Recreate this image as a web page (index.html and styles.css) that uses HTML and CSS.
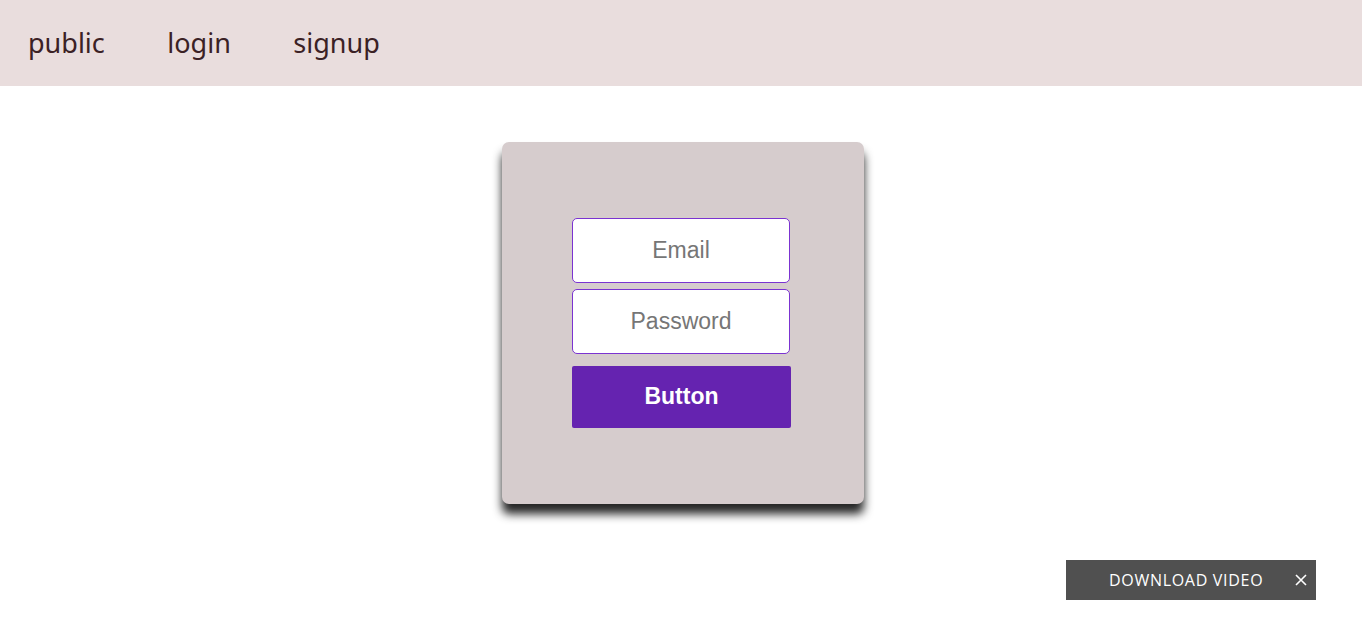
FILE: index.html
```html
<!DOCTYPE html>
<html>
<head>
<meta charset="utf-8">
<link rel="stylesheet" href="styles.css">
</head>
<body>
<nav class="nav">
  <a class="nav-link" href="#">public</a>
  <a class="nav-link" href="#">login</a>
  <a class="nav-link" href="#">signup</a>
</nav>
<main class="main">
  <div class="card">
    <form class="form">
      <input class="field" type="email" placeholder="Email">
      <input class="field" type="password" placeholder="Password">
      <button class="btn" type="button">Button</button>
    </form>
  </div>
</main>
<div class="dl">
  <span class="dl-text">DOWNLOAD VIDEO</span>
  <svg class="dl-close" width="12" height="12" viewBox="0 0 12 12"><path d="M1 1 L11 11 M11 1 L1 11" stroke="#fff" stroke-width="1.6" fill="none"/></svg>
</div>
</body>
</html>
```
FILE: styles.css
```css
html, body { margin: 0; padding: 0; }
body { background: #fff; font-family: "Liberation Sans", Arial, sans-serif; height: 628px; overflow: hidden; }
.nav {
  height: 86px;
  background: #e9dddd;
  display: flex;
  align-items: center;
  padding-left: 28px;
  box-sizing: border-box;
}
.nav-link {
  font-family: "Noto Sans", "Open Sans", sans-serif;
  font-size: 27px;
  color: #3b2125;
  text-decoration: none;
  margin-right: 62.5px;
  line-height: 1;
  padding-bottom: 2px;
}
.main {
  display: flex;
  justify-content: center;
  padding-top: 56px;
}
.card {
  width: 362px;
  height: 362px;
  background: #d6cccd;
  border-radius: 7px;
  box-shadow: 0 10px 10px rgba(0,0,0,0.85);
  display: flex;
  align-items: center;
  justify-content: center;
  margin-left: 4px;
}
.form {
  display: flex;
  flex-direction: column;
  width: 219px;
  margin-left: -3px;
}
.field {
  box-sizing: border-box;
  width: 218px;
  height: 65px;
  border: 1px solid #7b33d1;
  border-radius: 5px;
  background: #fff;
  font-family: "Liberation Sans", Arial, sans-serif;
  font-size: 23px;
  text-align: center;
  color: #333;
  outline: none;
  padding: 0;
}
.field + .field { margin-top: 6px; }
.field::placeholder { color: #767676; }
.btn {
  margin-top: 12px;
  width: 219px;
  height: 62px;
  border: none;
  border-radius: 2px;
  background: #6523b0;
  color: #fff;
  font-family: "Liberation Sans", Arial, sans-serif;
  font-weight: bold;
  font-size: 23px;
  padding: 0 0 2px;
}
.dl {
  position: absolute;
  left: 1066px;
  top: 560px;
  width: 250px;
  height: 40px;
  background: #505050;
  color: #fff;
  font-family: "Open Sans", "Noto Sans", sans-serif;
  font-size: 16px;
  display: flex;
  align-items: center;
  box-sizing: border-box;
  padding-left: 43px;
}
.dl-text { flex: 1; letter-spacing: 0.7px; }
.dl-close { margin-right: 9px; }
```
